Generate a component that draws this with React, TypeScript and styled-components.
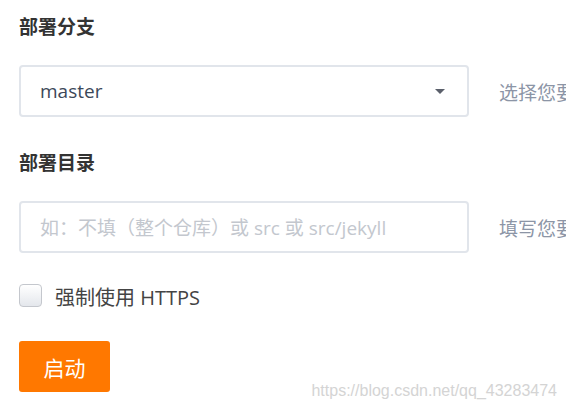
import React from "react";
import styled, { createGlobalStyle } from "styled-components";

const GlobalStyle = createGlobalStyle`
  html, body {
    margin: 0;
    padding: 0;
    background: #ffffff;
    overflow: hidden;
  }
  body {
    font-family: "Open Sans", "Noto Sans CJK SC", sans-serif;
  }
`;

const Page = styled.div`
  position: relative;
  width: 566px;
  height: 412px;
  padding: 13px 0 0 19px;
  box-sizing: border-box;
  overflow: hidden;
`;

const Heading = styled.div<{ $gap: number }>`
  font-family: "Noto Sans CJK SC", sans-serif;
  font-size: 19px;
  font-weight: 700;
  line-height: 26px;
  color: #333333;
  margin-bottom: ${(p) => p.$gap}px;
`;

const FieldRow = styled.div<{ $gap: number }>`
  display: flex;
  align-items: center;
  gap: 30px;
  margin-bottom: ${(p) => p.$gap}px;
`;

const Box = styled.div`
  flex: 0 0 450px;
  width: 450px;
  height: 52px;
  box-sizing: border-box;
  border: 2px solid #e1e5eb;
  border-radius: 4px;
  display: flex;
  align-items: center;
  padding: 0 19px;
  background: #fff;
`;

const SelectValue = styled.span`
  flex: 1;
  font-family: "Open Sans", "Noto Sans CJK SC", sans-serif;
  font-size: 19px;
  color: #3c4859;
`;

const Caret = styled.span`
  width: 0;
  height: 0;
  border-left: 5px solid transparent;
  border-right: 5px solid transparent;
  border-top: 5px solid #5b606b;
  margin-right: 3px;
`;

const Placeholder = styled.span`
  font-family: "Open Sans", "Noto Sans CJK SC", sans-serif;
  font-size: 19px;
  color: #c3c7ce;
  white-space: nowrap;
`;

const Help = styled.span`
  flex: 1 1 auto;
  min-width: 0;
  overflow: hidden;
  font-family: "Noto Sans CJK SC", sans-serif;
  font-size: 19px;
  color: #8c95a6;
  white-space: nowrap;
`;

const CheckRow = styled.label`
  display: flex;
  align-items: center;
  gap: 13px;
  height: 24px;
  margin-bottom: 34px;
`;

const CheckBox = styled.span`
  flex: 0 0 23px;
  width: 23px;
  height: 23px;
  box-sizing: border-box;
  border: 1px solid #c4c7cd;
  border-radius: 4px;
  background: linear-gradient(#ffffff, #e4e7ec);
`;

const CheckLabel = styled.span`
  font-family: "Open Sans", "Noto Sans CJK SC", sans-serif;
  font-size: 20px;
  color: #444444;
  margin-top: 3px;
`;

const Button = styled.button`
  display: block;
  width: 91px;
  height: 51px;
  border: none;
  border-radius: 3px;
  background: #ff7800;
  color: #ffffff;
  font-family: "Noto Sans CJK SC", sans-serif;
  font-size: 21px;
  padding: 0;
  cursor: pointer;
`;

const Watermark = styled.div`
  position: absolute;
  right: 9px;
  bottom: 12px;
  font-family: "Liberation Sans", Arial, sans-serif;
  font-size: 16px;
  color: #d4d4d4;
`;

export default function App() {
  return (
    <>
      <GlobalStyle />
      <Page>
        <Heading $gap={26}>部署分支</Heading>
        <FieldRow $gap={32}>
          <Box>
            <SelectValue>master</SelectValue>
            <Caret />
          </Box>
          <Help>选择您要部署的分支</Help>
        </FieldRow>
        <Heading $gap={26}>部署目录</Heading>
        <FieldRow $gap={30}>
          <Box>
            <Placeholder>如：不填（整个仓库）或 src 或 src/jekyll</Placeholder>
          </Box>
          <Help>填写您要部署的目录</Help>
        </FieldRow>
        <CheckRow>
          <CheckBox />
          <CheckLabel>强制使用 HTTPS</CheckLabel>
        </CheckRow>
        <Button>启动</Button>
        <Watermark>https://blog.csdn.net/qq_43283474</Watermark>
      </Page>
    </>
  );
}
